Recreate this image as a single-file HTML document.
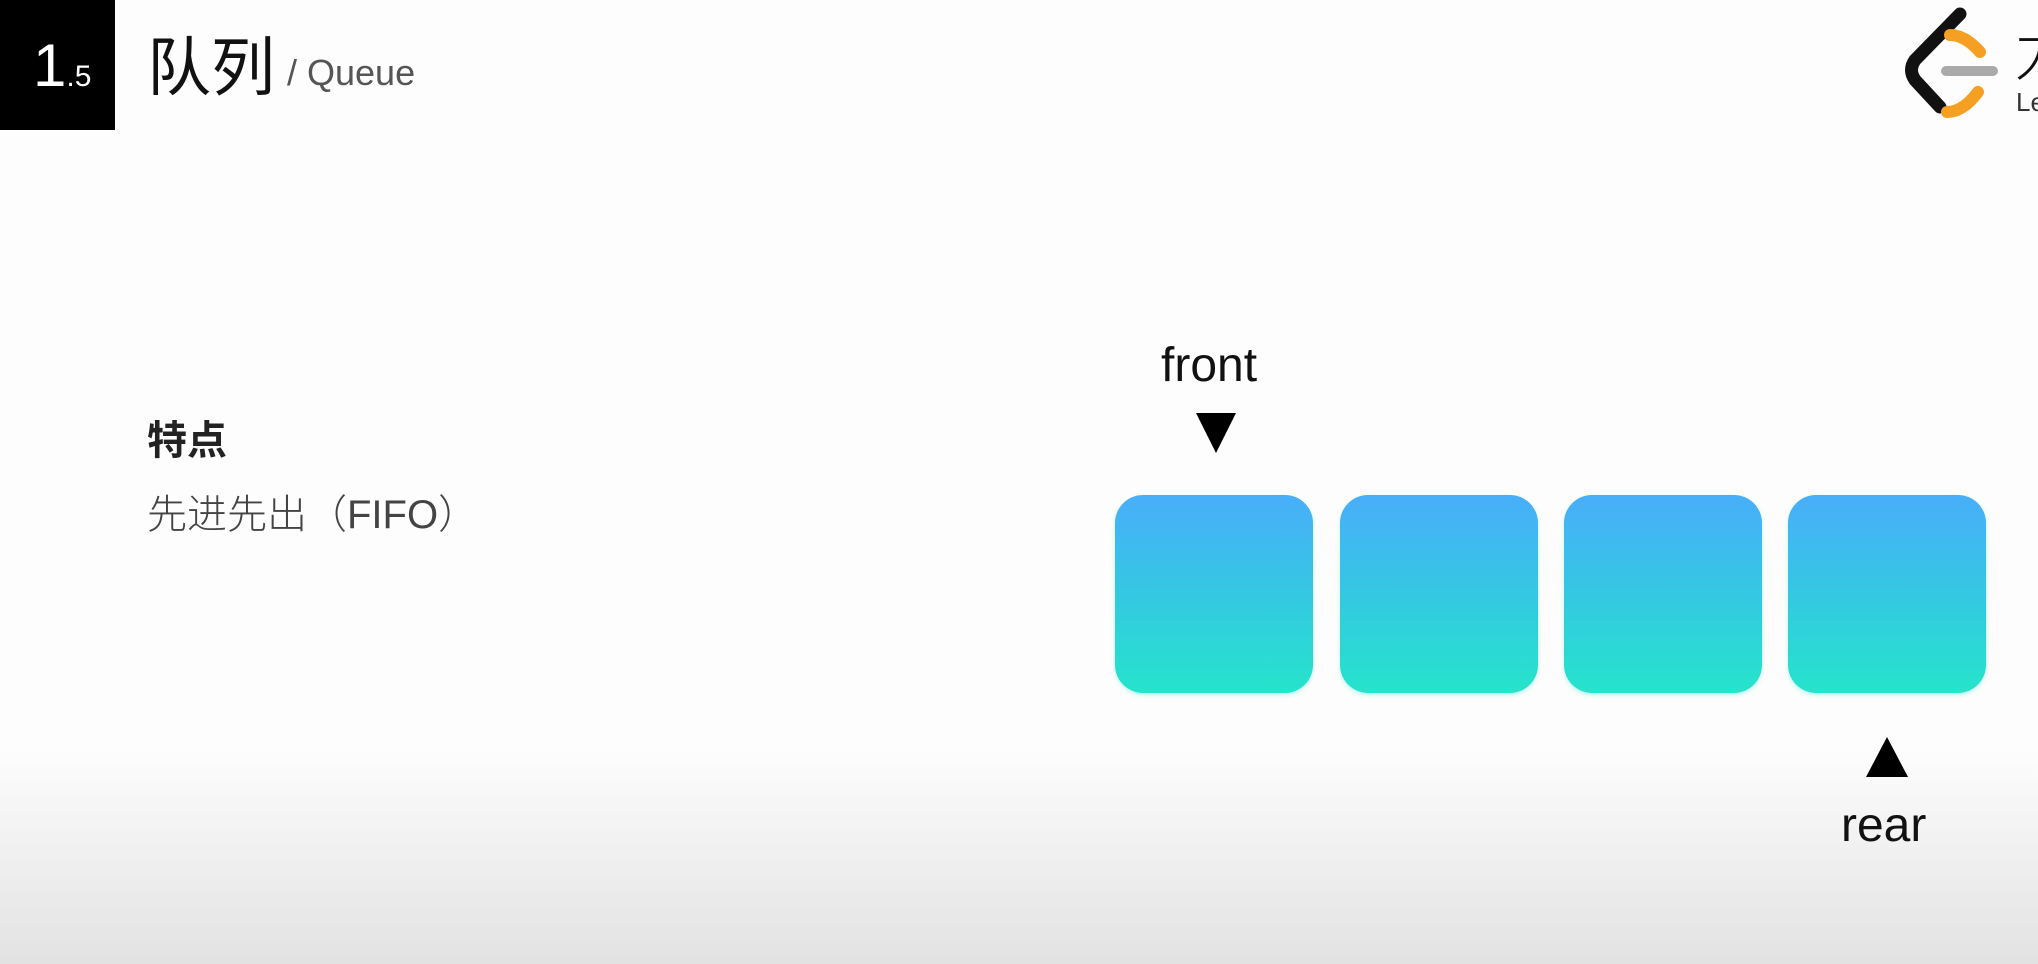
<!DOCTYPE html>
<html><head><meta charset="utf-8"><style>
body{margin:0;width:2038px;height:964px;overflow:hidden;position:relative;font-family:"Liberation Sans","Noto Sans CJK SC",sans-serif;background:linear-gradient(#fdfdfd 0,#fdfdfd 750px,#e2e2e2 964px);}
.a{position:absolute;white-space:nowrap;}
.box{position:absolute;top:495px;width:198px;height:198px;border-radius:28px;background:linear-gradient(#49aefa,#34c8e2 50%,#25e4cb);box-shadow:0 2px 4px rgba(40,230,210,.3);}
</style></head><body>
<div class="a" style="left:0;top:0;width:115px;height:130px;background:#000"></div>
<div class="a" style="left:33px;top:36px;color:#fff;font-size:60px;line-height:60px;">1<span style="font-size:30px">.5</span></div>
<div class="a" style="left:147px;top:26px;font-size:64px;line-height:74px;color:#111;font-family:'Noto Sans CJK SC',sans-serif;font-weight:400">队列</div>
<div class="a" style="left:287px;top:52px;font-size:36px;color:#555;">/ Queue</div>
<svg class="a" style="left:1850px;top:0" width="188" height="130" viewBox="0 0 188 130">
<path d="M110 14 L65 60 Q58 70 65 80 L90 107" stroke="#111" stroke-width="13" fill="none" stroke-linecap="round"/>
<path d="M100 35 Q115 35 130 52" stroke="#f5a023" stroke-width="12" fill="none" stroke-linecap="round"/>
<path d="M97 112 Q113 112 128 92" stroke="#f5a023" stroke-width="12" fill="none" stroke-linecap="round"/>
<path d="M96 71 H143" stroke="#aaa" stroke-width="10" stroke-linecap="round"/>
<text x="164" y="75" font-size="60" font-family="Noto Sans CJK SC" font-weight="300" fill="#111">力</text>
<text x="166" y="111" font-size="26" fill="#333">Le</text>
</svg>
<div class="a" style="left:147px;top:408px;font-size:40px;font-weight:bold;color:#222;font-family:'Noto Sans CJK SC',sans-serif">特点</div>
<div class="a" style="left:147px;top:482px;font-size:40px;color:#444;font-family:'Liberation Sans','Noto Sans CJK SC',sans-serif;font-weight:300">先进先出（FIFO）</div>
<div class="a" style="left:1161px;top:338px;font-size:48px;color:#111">front</div>
<svg class="a" style="left:1196px;top:413px" width="40" height="40"><polygon points="0,0 40,0 20,40" fill="#000"/></svg>
<div class="box" style="left:1115px"></div>
<div class="box" style="left:1340px"></div>
<div class="box" style="left:1564px"></div>
<div class="box" style="left:1788px"></div>
<svg class="a" style="left:1866px;top:737px" width="42" height="40"><polygon points="21,0 42,40 0,40" fill="#000"/></svg>
<div class="a" style="left:1841px;top:798px;font-size:48px;color:#111">rear</div>
</body></html>
